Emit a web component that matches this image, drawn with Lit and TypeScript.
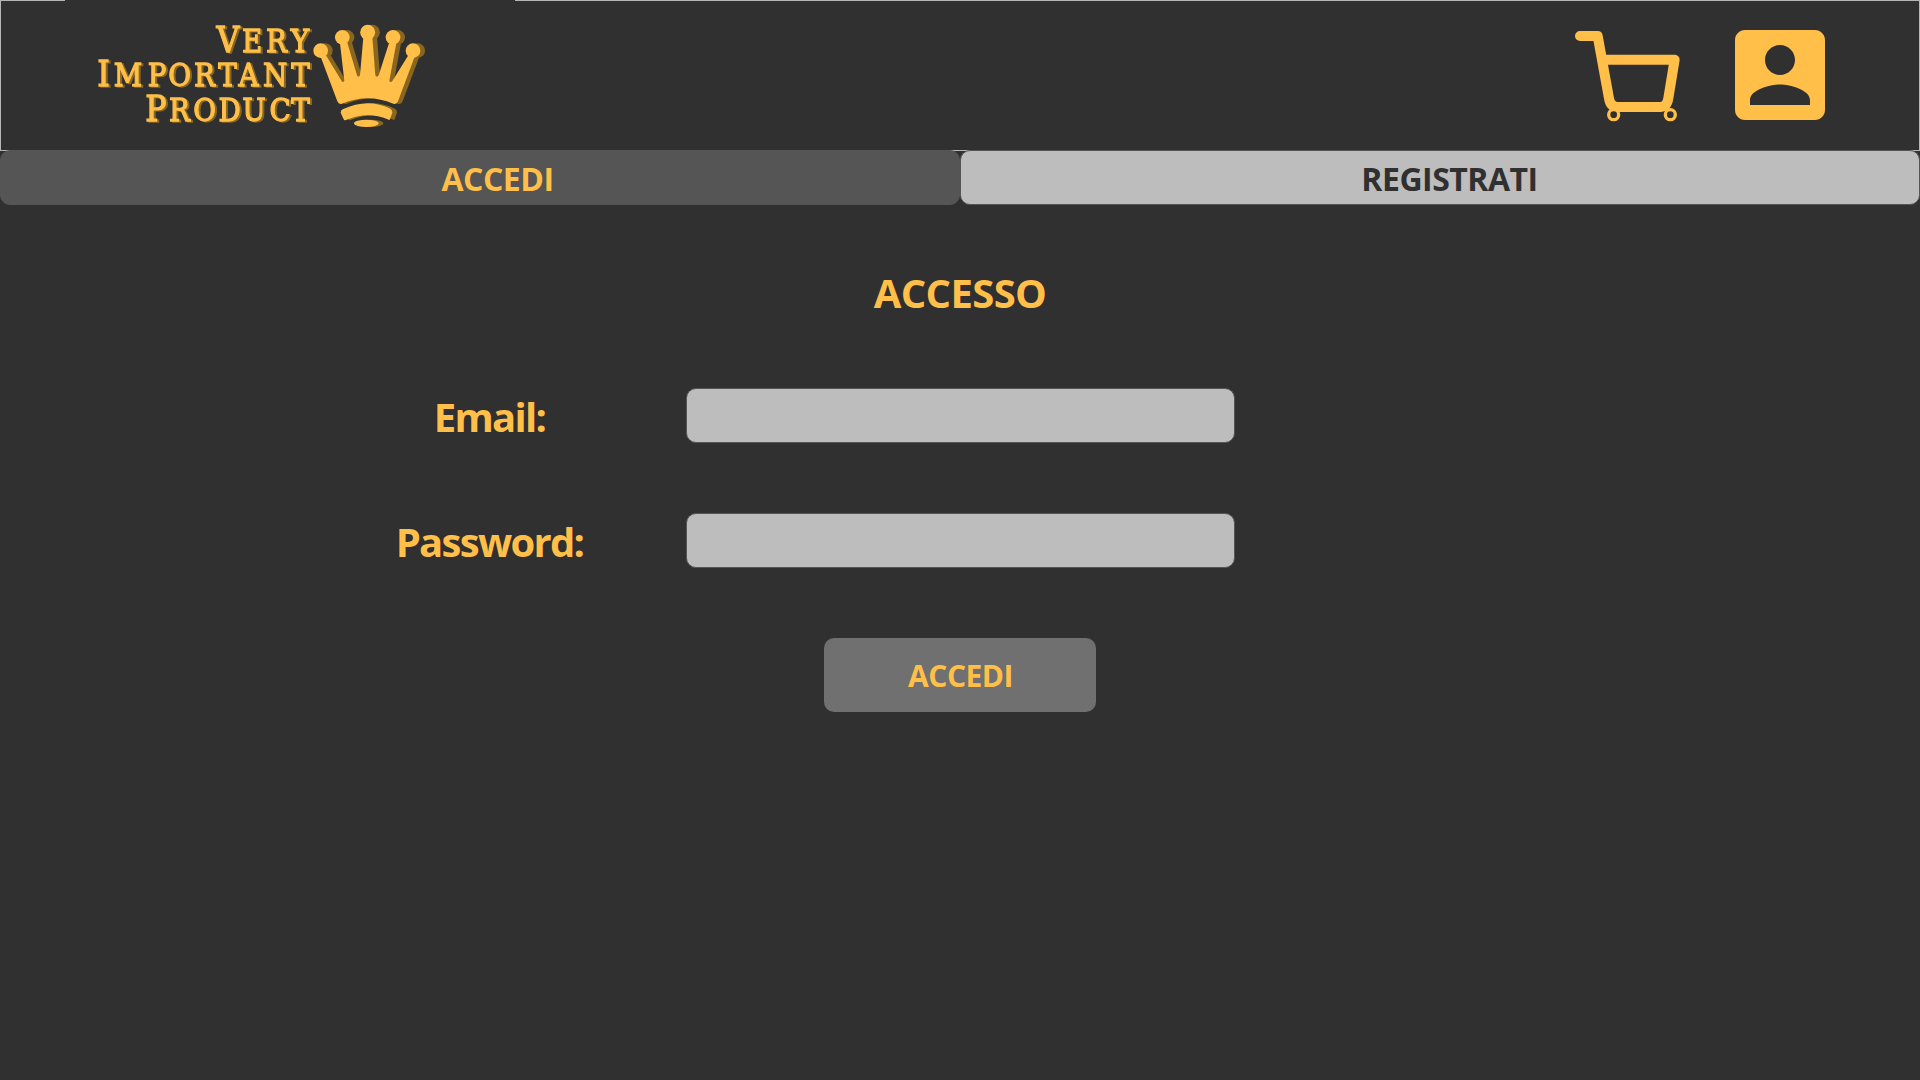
import { LitElement, html, css, svg } from "lit";
import { customElement, state } from "lit/decorators.js";

const crown = svg`
  <circle cx="92" cy="152" r="22"/><circle cx="157" cy="112" r="22"/>
  <circle cx="233" cy="97" r="22.5"/><circle cx="309" cy="112" r="22"/>
  <circle cx="369" cy="152" r="22"/>
  <path d="M92 170 L142 304 Q146 314 156 311 Q233 278 310 311 Q320 314 324 304 L374 170 L356 164 L307 243 Q302 249 298 242 L319 130 L297 130 L266 226 Q261 234 256 226 L247 112 L220 112 L210 226 Q205 234 201 226 L172 128 L150 130 L163 242 Q159 249 155 243 L107 164 Z"/>
  <path d="M152 338 Q152 331 158 328 Q233 292 301 326 Q308 330 307 338 L300 358 Q298 362 293 358 Q233 333 168 360 Q163 362 161 358 Z"/>
  <ellipse cx="229" cy="370" rx="37" ry="11"/>`;

/** Horizontal scale of the logo lettering. */
const STRETCH = 0.88;

@customElement("vip-logo")
class VipLogo extends LitElement {
  static styles = css`
    :host { display: block; width: 450px; height: 150px; background: #303030; }
    svg { display: block; }
    text { font-family: "DejaVu Serif", serif; font-weight: 400; font-size: 31.5px; text-anchor: middle;
      fill: #ffbf49; stroke: #ffbf49; stroke-width: 1.3; }
    .cap { font-size: 36px; }
    .lettering { filter: drop-shadow(2px 1.4px 0 #8a661f); }
    .gold { fill: #ffbf49; }
    .shade { fill: #8a661f; }
  `;

  private line(word: string, y: number, xs: number[]) {
    const at = xs.map((x) => x / STRETCH);
    return svg`<text y=${y}><tspan class="cap" x=${at[0]}>${word[0]}</tspan><tspan x=${at.slice(1).join(" ")}>${word.slice(1)}</tspan></text>`;
  }

  render() {
    return html`<svg width="450" height="150" viewBox="0 0 450 150">
      <g class="lettering"><g transform="scale(${STRETCH} 1)">
        ${this.line("VERY", 52, [163, 187, 211.5, 235])}
        ${this.line("IMPORTANT", 86.4, [38.5, 63, 92, 114.5, 139.5, 162.5, 183.5, 210, 235.5])}
        ${this.line("PRODUCT", 120.9, [91, 114.5, 139.5, 164.5, 189, 215, 235.5])}
      </g></g>
      <g transform="translate(225 0) scale(.33333)">
        <g class="shade" transform="translate(14 0)">${crown}</g>
        <g class="gold">${crown}</g>
      </g>
    </svg>`;
  }
}

@customElement("app-root")
class AppRoot extends LitElement {
  static styles = css`
    :host { display: block; width: 100%; height: 1080px; background: #303030; overflow: hidden;
      font-family: "Open Sans", "Noto Sans", sans-serif; font-weight: 700; color: #ffbf49; }
    * { box-sizing: border-box; }
    svg { display: block; }
    header { height: 151px; border: 1px solid #b4b7b4; display: flex; justify-content: space-between; }
    vip-logo { margin: -1px 0 0 64px; }
    .actions { display: flex; margin: 9px 79px 0 0; }
    .account { margin: 5px 0 0 35px; }
    nav { display: grid; grid-template-columns: 1fr 1fr; margin-top: -1px; }
    .tab { height: 55px; border: 1px solid #555; border-radius: 10px; background: #bdbdbd; color: #303030;
      font: inherit; font-size: 32px; line-height: 53px; padding: 1px 0 0 19px; letter-spacing: -.5px; }
    .tab:first-child { padding-left: 35px; }
    .tab.active { background: #555; color: #ffbf49; }
    form { display: flex; flex-direction: column; align-items: center; }
    h1 { margin: 58px 0 0; font-size: 40px; line-height: 60px; height: 125px; letter-spacing: -.6px; }
    .row { display: grid; grid-template-columns: 392px 549px 391px; height: 55px; margin-bottom: 70px; }
    label { font-size: 40px; line-height: 57px; text-align: center; letter-spacing: -1.7px; padding-right: 1px; }
    input { width: 549px; height: 55px; border: 1px solid #555; border-radius: 10px; background: #bdbdbd; padding: 0 12px; font: inherit; outline: none; }
    .submit { width: 272px; height: 74px; border: 0; border-radius: 10px; background: #707070; color: #ffbf49;
      font: inherit; font-size: 30px; line-height: 72px; padding: 2px 0 0 1px; letter-spacing: -.5px; }
  `;

  @state() private active = 0;

  render() {
    return html`
      <header>
        <vip-logo></vip-logo>
        <div class="actions">
          <svg width="125" height="125" viewBox="0 0 375 375" fill="none" stroke="#ffbf49">
            <path stroke-width="30" stroke-linecap="round" stroke-linejoin="round" d="M60 78H113L147 265Q151 290 172 291H302Q321 290 325 265L344 149H137"/>
            <g stroke-width="10" fill="#303030"><circle cx="161" cy="314" r="15"/><circle cx="331" cy="314" r="15"/></g>
          </svg>
          <svg class="account" width="120" height="120" viewBox="0 0 24 24" fill="#ffbf49">
            <path d="M3 5v14c0 1.1.89 2 2 2h14c1.1 0 2-.9 2-2V5c0-1.1-.9-2-2-2H5c-1.11 0-2 .9-2 2zm12 4c0 1.66-1.34 3-3 3s-3-1.34-3-3 1.34-3 3-3 3 1.34 3 3zm-9 8c0-2 4-3.1 6-3.1s6 1.1 6 3.1v1H6v-1z"/>
          </svg>
        </div>
      </header>
      <nav>
        ${["ACCEDI", "REGISTRATI"].map((t, i) => html`<button class="tab ${i === this.active ? "active" : ""}" @click=${() => (this.active = i)}>${t}</button>`)}
      </nav>
      <form @submit=${(e: Event) => e.preventDefault()}>
        <h1>ACCESSO</h1>
        <div class="row"><label for="email">Email:</label><input id="email" type="email"></div>
        <div class="row"><label for="password">Password:</label><input id="password" type="password"></div>
        <button class="submit">ACCEDI</button>
      </form>`;
  }
}
